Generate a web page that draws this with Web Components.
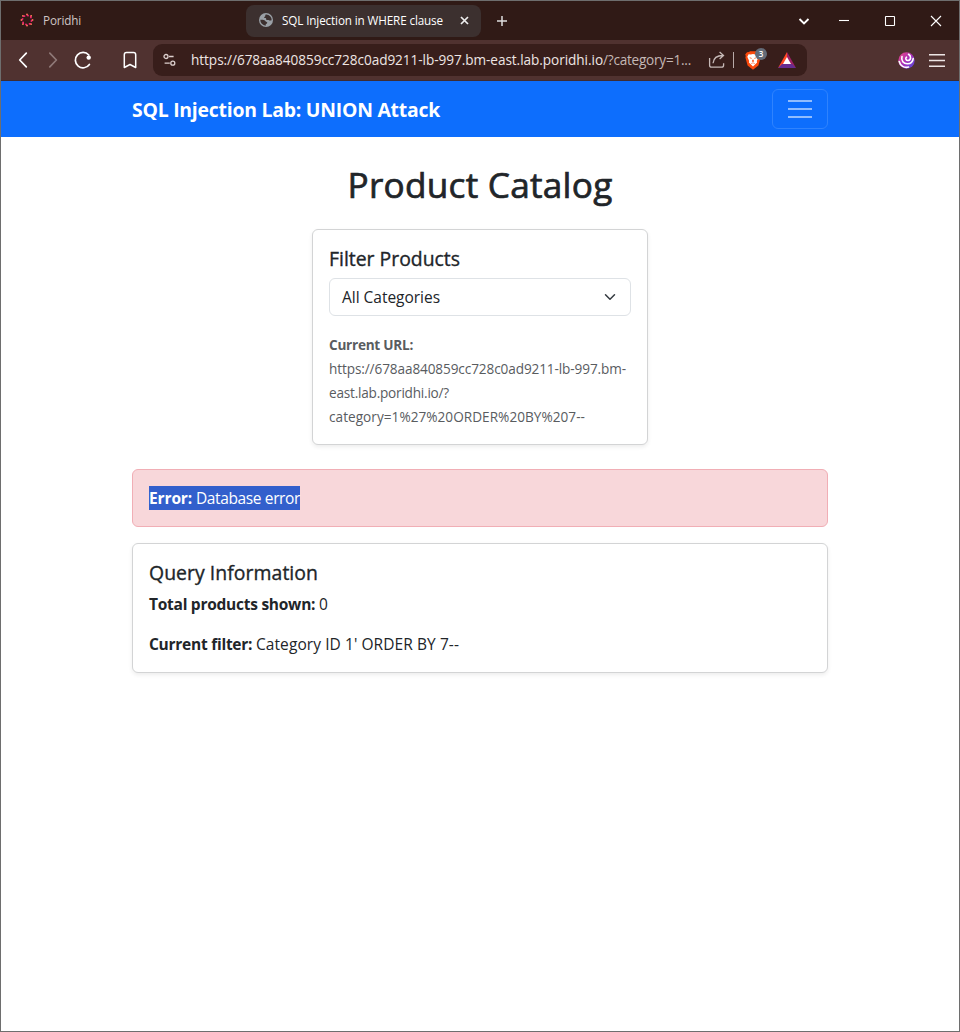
<!DOCTYPE html>
<html lang="en"><head><meta charset="utf-8"><title>SQL Injection in WHERE clause</title>
<style>
html,body{margin:0;height:100%;overflow:hidden}
body{font-family:"Open Sans","Noto Sans",sans-serif;color:#212529;background:#fff}
</style></head><body>
<browser-window>
  <tab-strip slot="chrome"></tab-strip>
  <tool-bar slot="chrome"></tool-bar>
  <nav-bar><fit-text w="308">SQL Injection Lab: UNION Attack</fit-text></nav-bar>
  <catalog-page></catalog-page>
</browser-window>
<script>
const define=(name,html,setup)=>{
  const t=document.createElement('template');t.innerHTML=html;
  customElements.define(name,class extends HTMLElement{
    constructor(){super();this.attachShadow({mode:'open'}).append(t.content.cloneNode(true));}
    connectedCallback(){if(setup)setup(this);}
  });
};

/* Inline label that spaces its letters so that it is w pixels wide. */
define('fit-text',`<style>:host{display:inline-block;white-space:pre;vertical-align:baseline}</style><slot></slot>`,el=>{
  const fit=()=>{
    el.style.letterSpacing='0px';
    const n=el.textContent.length, w=+el.getAttribute('w');
    const natural=el.getBoundingClientRect().width;
    if(w&&natural)el.style.letterSpacing=((w-natural)/n).toFixed(4)+'px';
  };
  window.addEventListener('load',fit);
});

define('browser-window',`<style>
:host{display:flex;flex-direction:column;box-sizing:border-box;width:960px;height:1032px;border:1px solid #6e6e6e;background:#fff}
.chrome{display:flex;flex-direction:column;border-bottom:1px solid #3e2c33}
</style><div class="chrome"><slot name="chrome"></slot></div><slot></slot>`);

define('tab-strip',`<style>
:host{display:flex;height:39px;align-items:center;background:#301a16;color:#cfc6c4;font-size:11.7px;line-height:16px}
svg{display:block;flex:none}
.tab{display:flex;align-items:center;box-sizing:border-box;height:32px;border-radius:8px;padding-bottom:1px}
.idle{width:239px;padding-left:13px;margin-left:6px;gap:9px}
.active{width:235px;background:#3c302f;color:#fff;padding-left:13px}
.active fit-text{margin:0 17px 0 9px}
.plus{margin-left:15px}
.win{display:flex;margin-left:auto}
</style>
<div class="tab idle"><svg width="14" height="14" viewBox="0 0 14 14" fill="none" stroke-linecap="round"><g stroke="#f0266f" stroke-width="1.8"><path d="M7 1.7 8 2.6M10.8 3.2l.1 1.3M12.3 7l-.9 1M10.8 10.8l-1.3.1M7 12.3l-1-.9M3.2 10.8l-.1-1.3M1.7 7l.9-1M3.2 3.2l1.3-.1"/></g><g stroke="#f99a45" stroke-width="1.4"><path d="M7 1.2h.01M11.3 2.8h.01M12.8 7h.01M11.2 11.3h.01M7 12.8h.01M2.8 11.2h.01M1.2 7h.01M2.8 2.8h.01"/></g></svg><fit-text w="38">Poridhi</fit-text></div>
<div class="tab active"><svg width="14" height="14" viewBox="0 0 14 14"><circle cx="7" cy="7" r="7" fill="#9aa0a6"/><path d="M7.4 1.5c-1 0-1.2.5-1.1 1.2.1.8-.6.8-1 1.2-.5.5.2 1 .9 1 .9 0 1 .7 1 1.3 0 .8.8 1 1.7.8 1-.2 1.2.5 2 .5.7 0 1.3-.4 1.8-.3A5.7 5.7 0 0 0 7.4 1.5ZM1.3 6.8c1.4 0 3.4 0 4.2.5.9.5 1 1.4 2 1.6 1 .2.9 1 .4 1.5-.5.5-1.2.6-1.2 1.3v1A5.7 5.7 0 0 1 1.3 6.8Z" fill="#3c302f"/></svg><fit-text w="161">SQL Injection in WHERE clause</fit-text><svg width="9" height="9" viewBox="0 0 9 9" stroke="#eee" stroke-width="1.7"><path d="m1 1 7 7M8 1 1 8"/></svg></div>
<svg class="plus" width="12" height="12" viewBox="0 0 12 12" stroke="#ddd" stroke-width="1.5"><path d="M6 1v10M1 6h10"/></svg>
<svg class="win" width="161" height="20" viewBox="798 10 161 20" fill="none" stroke="#fff" stroke-width="1.1"><path d="m799.5 18 4.5 4.5 4.5-4.5" stroke-width="1.9"/><path d="M839 19.5h10"/><rect x="885.5" y="15.5" width="9" height="9" rx=".5"/><path d="m931 15 10 10m0-10-10 10"/></svg>`);

define('tool-bar',`<style>
:host{display:flex;height:40px;align-items:center;background:#503230}
svg{display:block;flex:none}
.address{display:flex;align-items:center;box-sizing:border-box;width:654px;height:32px;background:#381e1b;border-radius:9px;font-size:13.6px;color:#eee5e3;padding-left:10px}
.address fit-text{padding-bottom:1px}
.path{color:#c4b8b5}
.shields{position:relative;margin-left:11px;width:22px;height:19px}
.badge{position:absolute;left:10px;top:-3px;width:12px;height:12px;border-radius:50%;background:#646b77;color:#fff;font-size:8px;font-weight:600;line-height:12px;text-align:center}
</style>
<svg width="152" height="40" viewBox="1 40 152 40" fill="none" stroke="#fff" stroke-width="1.7" stroke-linecap="round" stroke-linejoin="round"><path d="m26.3 53.2-6.6 6.8 6.6 6.8"/><path d="m49.8 53.2 6.6 6.8-6.6 6.8" stroke="#8f7977"/><path d="M89.4 64.5A7.7 7.7 0 1 1 88.8 55"/><circle cx="88.7" cy="57.6" r="2.2" fill="#fff" stroke="none"/><path d="M124.3 54.7c0-1.5.8-2.2 2.2-2.2h7c1.4 0 2.2.7 2.2 2.2v12.8l-5.7-3-5.7 3z" stroke-width="1.5"/></svg>
<div class="address">
<svg width="13" height="14" viewBox="0 0 13 14" fill="none" stroke="#ddd0ce" stroke-width="1.3"><circle cx="3" cy="3.5" r="2"/><path d="M6 3.5h4.6M1.6 10.2h5.2"/><circle cx="9.8" cy="10.2" r="2"/></svg>
<fit-text w="412" style="margin-left:15px">https://678aa840859cc728c0ad9211-lb-997.bm-east.lab.poridhi.io</fit-text><fit-text class="path" w="88">/?category=1...</fit-text>
<svg style="margin-left:17px" width="18" height="18" viewBox="0 0 18 18" fill="none" stroke="#c6b9b7" stroke-width="1.3"><path d="M1.6 7v7.2c0 1.3.7 2 2 2h10c1.3 0 2-.7 2-2v-2"/><path d="M5 12.2C5.5 7 8.5 4.5 15 4.5M11.6 1l3.9 3.5L11.6 8"/></svg>
<svg style="margin-left:6px" width="2" height="16"><path d="M1.5 0v16" stroke="#b8aaa8"/></svg>
<div class="shields"><svg width="16" height="19" viewBox="0 0 16 19"><path d="m4 1 1-.8h6l1.2 1L14 1l1.8 2.5-.6 1.5.4 1.5-2.2 8L8 18.7l-5.4-4.2-2.2-8L.8 5 .2 3.5 2 1.2z" fill="#fb4a0d"/><path d="m3.6 3.2 2.2.4L8 3.1l2.2.5 2.2-.4 1.3 2.5-1.9 4.2.3 1.7L8 15.6l-4.1-4 .3-1.7-1.9-4.2z" fill="#fff"/><path d="m4.2 6.3 2.5.6-.5 1zm7.6 0-2.5.6.5 1zM7.7 8.500h.6l.8 1.700L8 10.900l-1.100-.7z" fill="#fb4a0d"/><path d="m6.200 12.600 1.800-.8 1.800.8" fill="none" stroke="#fb4a0d" stroke-width=".6"/></svg><span class="badge">3</span></div>
<svg style="margin-left:11px" width="18" height="16" viewBox="0 0 18 16"><path d="M9 0 0 16l9-5.2z" fill="#ff4724"/><path d="m9 0 9 16-9-6z" fill="#9e1f63"/><path d="M0 16h18l-4-4H4z" fill="#662d91"/><path d="M9 5 5 12h8z" fill="#fff"/></svg>
</div>
<svg style="margin-left:91px" width="17" height="17" viewBox="0 0 17 17"><defs><linearGradient id="g" x2="1" y2="1"><stop stop-color="#ee4a80"/><stop offset=".5" stop-color="#a92fb8"/><stop offset="1" stop-color="#4b4ce0"/></linearGradient></defs><circle cx="8.5" cy="8.5" r="8.2" fill="url(#g)"/><path d="M8.500 5.200C7 6.500 8 8.800 10.200 8.500c3-.5 3.200-4.500.3-6.200M4 4.500C2.800 8.500 5.500 12 9.600 11.800c3.200-.2 5.200-2.300 5.600-5.200M1.200 9.500c1 4.500 5.200 6.700 9.300 5.500" fill="none" stroke="#fff" stroke-width="1.600" stroke-linecap="round"/></svg>
<svg style="margin-left:13px" width="18" height="16" viewBox="0 0 18 16" stroke="#eee6e5" stroke-width="1.5"><path d="M1 2.700h16M1 8.500h16M1 14.300h16"/></svg>`);

define('nav-bar',`<style>
:host{display:flex;align-items:center;justify-content:space-between;box-sizing:border-box;height:56px;padding:0 131px;background:#0d6efd;color:#fff;font-size:19.4px;font-weight:700;line-height:30px}
slot{display:block;padding-top:2px}
button{display:flex;align-items:center;justify-content:center;box-sizing:border-box;width:56px;height:40px;padding:0;background:none;border:1px solid #2f83fe;border-radius:6px}
</style><slot></slot><button aria-label="Toggle navigation"><svg width="30" height="30" viewBox="0 0 30 30"><path stroke="rgba(255,255,255,.55)" stroke-width="2" d="M3 7h24M3 15h24M3 23h24"/></svg></button>`);

define('info-card',`<style>
:host{display:block;box-sizing:border-box;padding:16px;background:#fff;border:1px solid #d3d4d5;border-radius:6px;box-shadow:0 2px 4px rgba(0,0,0,.075)}
h5{margin:0 0 8px;height:24px;font-size:19.4px;line-height:26px;font-weight:500;-webkit-text-stroke:.35px currentColor}
</style><h5><slot name="title"></slot></h5><slot></slot>`);

define('category-select',`<style>
:host{display:flex;align-items:center;justify-content:space-between;box-sizing:border-box;height:38px;padding:0 12px;border:1px solid #dee2e6;border-radius:6px;font-size:15.5px;line-height:24px}
</style><slot></slot><svg width="16" height="12" viewBox="0 0 16 16"><path fill="none" stroke="#343a40" stroke-linecap="round" stroke-linejoin="round" stroke-width="2" d="m2 5 6 6 6-6"/></svg>`);

define('error-alert',`<style>
:host{display:block;box-sizing:border-box;height:58px;padding:16px;background:#f8d7da;border:1px solid #f1aeb5;border-radius:6px;font-size:15.5px;line-height:24px}
.sel{display:inline-flex;height:24px;background:#325fcc;color:#fff}
</style><span class="sel"><slot></slot></span>`);

define('catalog-page',`<style>
:host{display:flex;flex-direction:column;padding:24px 131px}
h1{margin:0 0 24px;height:44px;font-size:35.2px;font-weight:500;line-height:46px;text-align:center;-webkit-text-stroke:.7px currentColor}
.filter{width:336px;height:216px;align-self:center;margin-bottom:24px}
.url{margin:17px 0 0;font-size:13.6px;line-height:24px;color:#595c5f}
.url fit-text{display:block;width:max-content}
b{font-weight:700}
p{margin:0;font-size:15.5px;line-height:24px}
p+p{margin-top:16px}
.query{margin-top:16px}
</style>
<h1><fit-text w="265">Product Catalog</fit-text></h1>
<info-card class="filter"><fit-text slot="title" w="131">Filter Products</fit-text>
<category-select><fit-text w="98">All Categories</fit-text></category-select>
<div class="url"><fit-text w="84"><b>Current URL:</b></fit-text><fit-text w="297">https://678aa840859cc728c0ad9211-lb-997.bm-</fit-text><fit-text w="120">east.lab.poridhi.io/?</fit-text><fit-text w="256">category=1%27%20ORDER%20BY%207--</fit-text></div></info-card>
<error-alert><fit-text w="47"><b>Error: </b></fit-text><fit-text w="104">Database error</fit-text></error-alert>
<info-card class="query"><fit-text slot="title" w="169">Query Information</fit-text>
<p><fit-text w="170"><b>Total products shown: </b></fit-text><fit-text w="9">0</fit-text></p>
<p><fit-text w="107"><b>Current filter: </b></fit-text><fit-text w="203">Category ID 1' ORDER BY 7--</fit-text></p></info-card>`);
</script></body></html>
